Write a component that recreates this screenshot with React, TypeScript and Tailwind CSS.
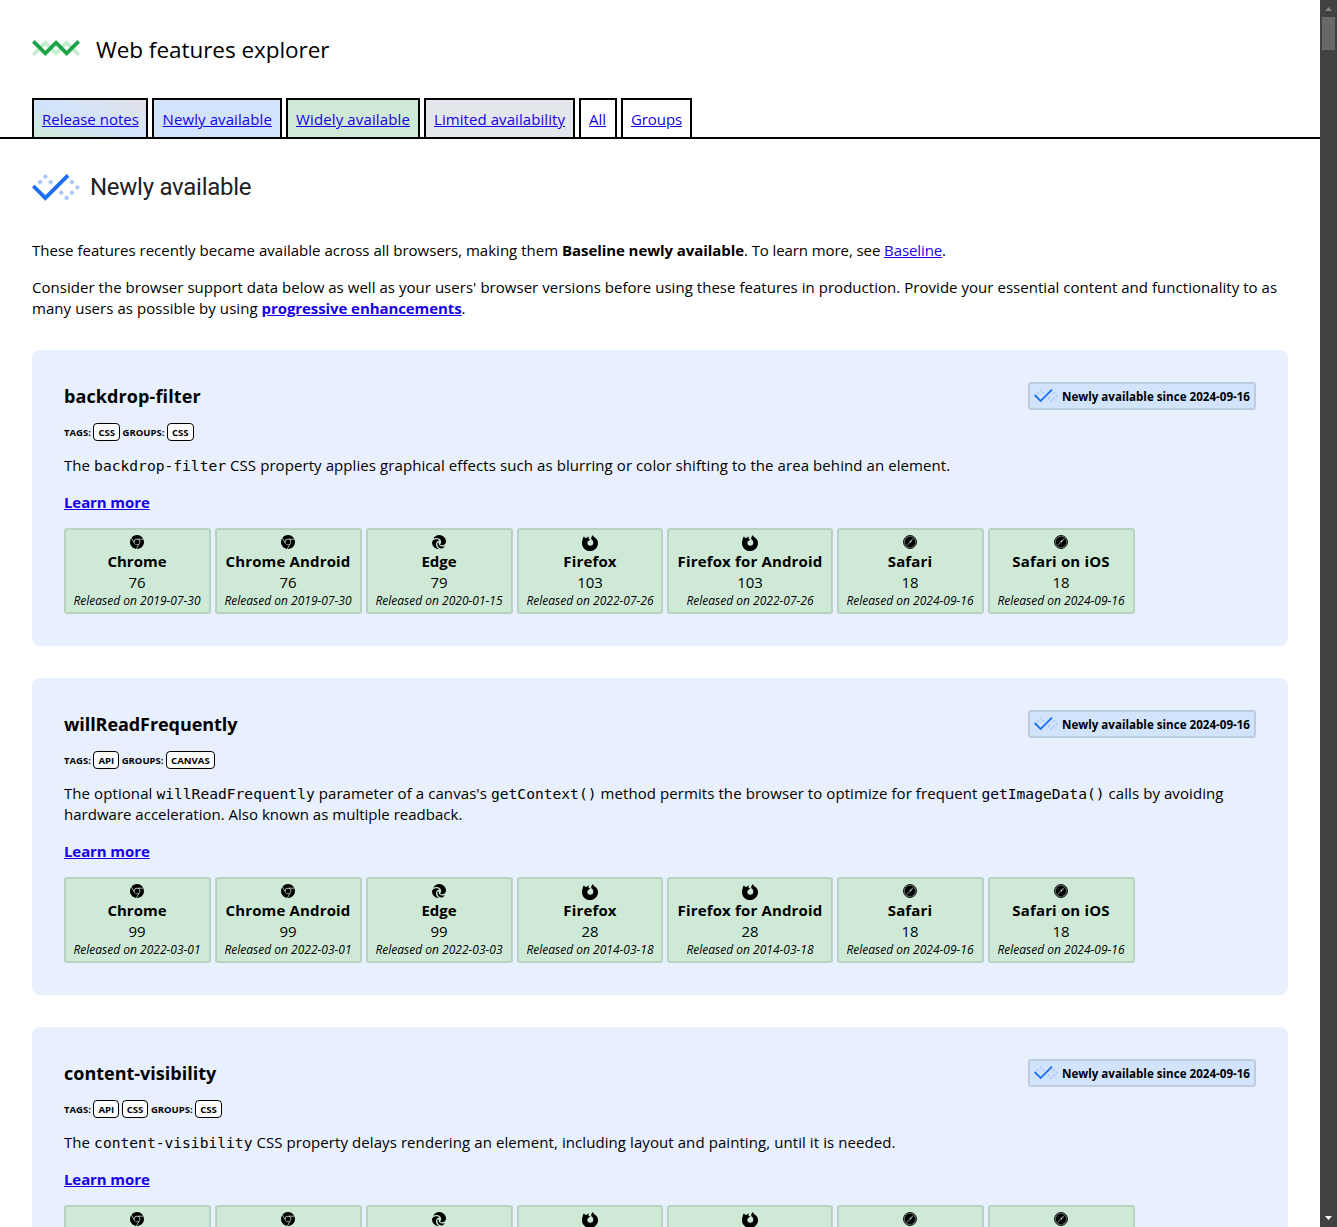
import type { ReactNode } from 'react';
import { SiGooglechrome } from 'react-icons/si';

const NEWLY_DOTS = [
  [150, 30], [90, 90], [210, 90], [450, 90], [510, 150], [330, 210], [450, 210], [390, 270],
];

function NewlyIcon({ className }: { className: string }) {
  return (
    <svg viewBox="0 0 540 300" className={className}>
      {NEWLY_DOTS.map(([x, y]) => (
        <path key={`${x}-${y}`} fill="#a8c7fa" d={`M${x} ${y - 30}l30 30l-30 30l-30 -30z`} />
      ))}
      <path fill="#1b6ef3" d="M30 120L150 240L390 0L420 30L150 300L0 150Z" />
    </svg>
  );
}

function WidelyIcon() {
  return (
    <svg viewBox="0 0 540 180" className="h-4 w-12" fill="none" strokeWidth="42">
      <path stroke="#c4eed0" d="M15 165L150 30L270 150L390 30L525 165" />
      <path stroke="#1ea446" d="M15 15L150 150L270 30L390 150L525 15" />
    </svg>
  );
}

const TABS = [
  { label: 'Release notes', cls: 'w-[116px] bg-[linear-gradient(to_top_right,#ceead6,#d2e3fc,#e3e3e6)]' },
  { label: 'Newly available', cls: 'w-[130px] bg-[#d2e3fc] pl-[8.6px] tracking-[0.09px]' },
  { label: 'Widely available', cls: 'w-[134px] bg-[#ceead6] tracking-[0.13px]' },
  { label: 'Limited availability', cls: 'w-[151px] bg-[#e3e6ea] tracking-[0.07px]' },
  { label: 'All', cls: 'w-[38px] bg-white' },
  { label: 'Groups', cls: 'w-[71px] bg-white tracking-[-0.09px]' },
];

const BROWSERS = [
  { name: 'Chrome', icon: 'chrome', cls: 'w-[147px] pr-px', nameCls: '' },
  { name: 'Chrome Android', icon: 'chrome', cls: 'w-[147px] pr-px', nameCls: 'tracking-[0.15px]' },
  { name: 'Edge', icon: 'edge', cls: 'w-[147px] pr-px', nameCls: '' },
  { name: 'Firefox', icon: 'firefox', cls: 'w-[146px]', nameCls: 'tracking-[0.15px]' },
  { name: 'Firefox for Android', icon: 'firefox', cls: 'w-[166px]', nameCls: 'tracking-[0.16px]' },
  { name: 'Safari', icon: 'safari', cls: 'w-[147px] pr-px', nameCls: 'tracking-[0.15px]' },
  { name: 'Safari on iOS', icon: 'safari', cls: 'w-[147px] pr-px', nameCls: 'tracking-[0.16px]' },
];

function BrowserIcon({ icon }: { icon: string }) {
  if (icon === 'chrome') return <SiGooglechrome className="size-3.5" />;
  if (icon === 'edge') {
    return (
      <svg viewBox="0 0 14 14" className="size-3.5">
        <path d="M1.3 3.6C2.6 1.2 4.8 0 7.2 0C11 0 14 3 14 6.6C14 8.9 12.3 10.3 10.3 10.3C8.9 10.3 8 9.8 8.2 9.2C8.8 8.5 9.2 8 9.2 7C9.2 4.6 6.9 3.1 4.5 3.1C3.3 3.1 2.2 3.3 1.3 3.6Z" />
        <path d="M0 7.2C0.4 5.4 2 4.2 4.2 4.2C5.6 4.2 6.9 4.7 7.6 5.6C5.7 5.6 4 7 4 9.3C4 11.2 5.2 12.9 7 13.9C3.2 14.2 0 11.2 0 7.2Z" />
        <path d="M5.3 9.1C5.3 8.1 5.7 7.4 6.4 7C6.3 9.6 8 11.5 10.4 11.5C11.4 11.5 12.2 11.3 13 10.9C12.1 12.4 10.8 13.4 9.3 13.6C7 13.3 5.3 11.3 5.3 9.1Z" />
      </svg>
    );
  }
  if (icon === 'firefox') {
    return (
      <svg viewBox="0 0 16 16" className="size-4">
        <path d="M0.6 4.6C0.8 3.4 1.2 2.4 2 1.3L3.1 3L5 2.6C5.6 1.9 6.3 1.5 7.2 1.4C6.6 2.2 6.4 3 6.7 3.9L8.2 4.6C8 5.4 6.8 5.5 6.1 6.1C5.4 6.9 5.2 7.7 5.4 8.6C5.8 10 6.8 10.8 8.2 10.8C10 10.8 11.3 9.5 11.3 7.7C11.3 6 10.4 5 9.2 4.3C9 2.5 9.6 1.1 11 0C11.2 1.4 12.4 2.1 13.5 3.1C15.1 4.5 16 6.2 16 8.2C16 12.6 12.4 16 8 16C3.5 16 0 12.6 0 8.2C0 6.9 0.2 5.7 0.6 4.6Z" />
      </svg>
    );
  }
  return (
    <svg viewBox="0 0 14 14" className="size-3.5">
      <circle cx="7" cy="7" r="6.5" fill="none" stroke="#000" strokeWidth="0.9" />
      <circle cx="7" cy="7" r="5.8" fill="none" stroke="#000" strokeWidth="1" strokeDasharray="0.7 0.45" />
      <circle cx="7" cy="7" r="5.4" />
      <path fill="#ceead6" d="M10.7 2.9L7.5 7.5L3.3 11.1L6.5 6.5Z" />
      <path d="M6.7 6.7L7.3 7.3L4.2 10.2Z" />
    </svg>
  );
}

function Code({ children }: { children: string }) {
  return <code className="font-['DejaVu_Sans_Mono',monospace] text-[14.62px] leading-none tracking-normal">{children}</code>;
}

type Feature = {
  title: string;
  titleCls: string;
  tags: string[];
  groups: string[];
  text: ReactNode;
  versions?: [string, string][];
};

const FEATURES: Feature[] = [
  {
    title: 'backdrop-filter',
    titleCls: 'tracking-[0.1px]',
    tags: ['CSS'],
    groups: ['CSS'],
    text: <>The <Code>backdrop-filter</Code> CSS property applies graphical effects such as blurring or color shifting to the area behind an element.</>,
    versions: [['76', '2019-07-30'], ['76', '2019-07-30'], ['79', '2020-01-15'], ['103', '2022-07-26'], ['103', '2022-07-26'], ['18', '2024-09-16'], ['18', '2024-09-16']],
  },
  {
    title: 'willReadFrequently',
    titleCls: 'tracking-[-0.07px]',
    tags: ['API'],
    groups: ['CANVAS'],
    text: <>The optional <Code>willReadFrequently</Code> parameter of a canvas's <Code>getContext()</Code> method permits the browser to optimize for frequent <Code>getImageData()</Code> calls by avoiding<br /><span className="tracking-[0.013px]">hardware acceleration. Also known as multiple readback.</span></>,
    versions: [['99', '2022-03-01'], ['99', '2022-03-01'], ['99', '2022-03-03'], ['28', '2014-03-18'], ['28', '2014-03-18'], ['18', '2024-09-16'], ['18', '2024-09-16']],
  },
  {
    title: 'content-visibility',
    titleCls: '',
    tags: ['API', 'CSS'],
    groups: ['CSS'],
    text: <>The <Code>content-visibility</Code> CSS property delays rendering an element, including layout and painting, until it is needed.</>,
  },
];

function Chip({ children }: { children: string }) {
  return (
    <span className="flex h-[18px] items-center rounded-[4px] border border-black bg-white px-1 text-[9.6px]">
      {children}
    </span>
  );
}

function FeatureCard({ feature }: { feature: Feature }) {
  return (
    <article className="rounded-lg bg-[#e8effd] p-8">
      <div className="flex h-7 items-center justify-between">
        <h2 className={`text-[18px] font-bold ${feature.titleCls}`}>{feature.title}</h2>
        <div className="flex h-7 w-[228px] items-center justify-between rounded-[3px] border-2 border-[#bdcce3] bg-[#d2e3fc] px-1">
          <NewlyIcon className="w-6" />
          <span className="whitespace-nowrap text-[11.6px] font-bold">Newly available since 2024-09-16</span>
        </div>
      </div>
      <div className="mt-[13px] flex h-[18px] items-center gap-[2.5px] text-[9.5px] font-bold">
        <span>TAGS:</span>
        {feature.tags.map((t) => <Chip key={t}>{t}</Chip>)}
        <span>GROUPS:</span>
        {feature.groups.map((t) => <Chip key={t}>{t}</Chip>)}
      </div>
      <p className="mt-3.5 whitespace-nowrap tracking-[0.08px]">{feature.text}</p>
      <p className="mt-4 font-bold"><a href="#" className="tracking-[-0.1px] text-[#1a00e8] underline">Learn more</a></p>
      <ul className="mt-[15px] flex gap-1">
        {BROWSERS.map((b, i) => (
          <li key={b.name} className={`flex h-[86px] flex-col items-center whitespace-nowrap rounded-[3px] border-2 border-[#b9d3c1] bg-[#ceead6] pt-[5px] ${b.cls}`}>
            <span className="flex h-4"><BrowserIcon icon={b.icon} /></span>
            {feature.versions && (
              <>
                <span className={`font-bold ${b.nameCls}`}>{b.name}</span>
                <span>{feature.versions[i][0]}</span>
                <span className="text-[12px] italic leading-[15px]">Released on {feature.versions[i][1]}</span>
              </>
            )}
          </li>
        ))}
      </ul>
    </article>
  );
}

export default function App() {
  return (
    <div className="flex h-[1227px] overflow-hidden bg-white font-['Open_Sans',sans-serif] text-[15px] leading-[21px] text-black">
      <div className="min-w-0 flex-1">
        <header className="border-b-2 border-black px-8">
          <div className="flex h-[98px] items-center gap-4">
            <div className="-mt-[3px] flex"><WidelyIcon /></div>
            <h1 className="pt-px text-[22.5px] tracking-[-0.04px]">Web features explorer</h1>
          </div>
          <nav className="flex h-[39px] gap-1">
            {TABS.map((t) => (
              <a key={t.label} href="#" className={`whitespace-nowrap border-2 border-b-0 border-black px-2 pt-[9px] text-[#1a00e8] underline ${t.cls}`}>
                {t.label}
              </a>
            ))}
          </nav>
        </header>
        <main className="px-8 pt-[35px]">
          <div className="flex h-[27px] items-center gap-2.5">
            <NewlyIcon className="w-12" />
            <h2 className="font-['Roboto',sans-serif] text-[24px] tracking-[-0.26px] text-[#202124]">Newly available</h2>
          </div>
          <p className="mt-[39px] whitespace-nowrap tracking-[0.013px]">
            These features recently became available across all browsers, making them <b className="tracking-[-0.067px]">Baseline newly available</b><span className="tracking-[-0.09px]">. To learn more, see <a href="#" className="text-[#1a00e8] underline">Baseline</a>.</span>
          </p>
          <p className="mt-4 whitespace-nowrap tracking-[0.037px]">
            Consider the browser support data below as well as your users' browser versions before using these features in production. Provide your essential content and functionality to as<br />
            <span className="tracking-[0.06px]">many users as possible by using </span><a href="#" className="font-bold tracking-[-0.084px] text-[#1a00e8] underline">progressive enhancements</a>.
          </p>
          <div className="mt-[31px] flex flex-col gap-8">
            {FEATURES.map((f) => <FeatureCard key={f.title} feature={f} />)}
          </div>
        </main>
      </div>
      <div className="flex w-[17px] flex-col items-center bg-[#424242] pb-[7px] pt-[7px]">
        <svg viewBox="0 0 7 4" className="h-1 w-[7px]" fill="#868686"><path d="M3.5 0L7 4H0Z" /></svg>
        <div className="mt-1.5 h-[33px] w-[13px] bg-[#686868]" />
        <svg viewBox="0 0 7 4" className="mt-auto h-1 w-[7px]" fill="#fff"><path d="M0 0H7L3.5 4Z" /></svg>
      </div>
    </div>
  );
}
